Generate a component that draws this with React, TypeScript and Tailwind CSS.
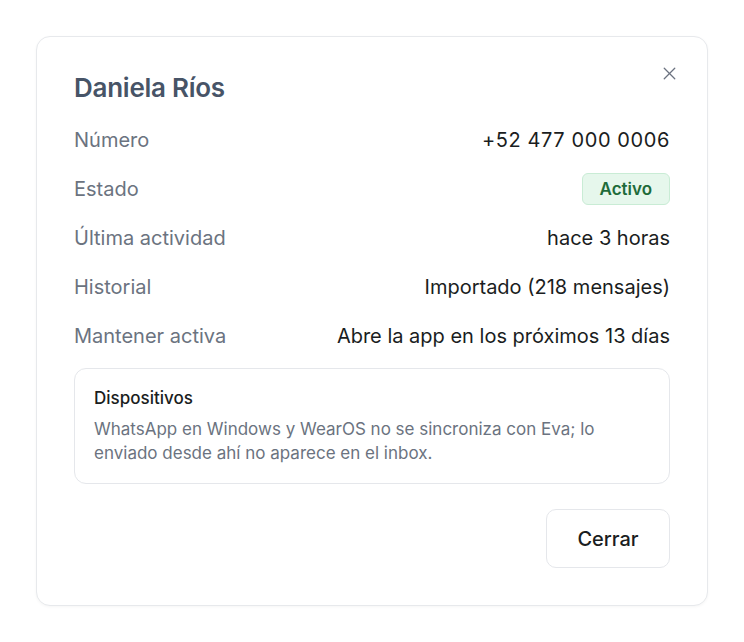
import { X } from 'lucide-react'

const rows = [
  { label: 'Número', value: '+52 477 000 0006', valueClass: 'tracking-[0.03em]' },
  { label: 'Estado', badge: 'Activo' },
  { label: 'Última actividad', value: 'hace 3 horas' },
  { label: 'Historial', value: 'Importado (218 mensajes)' },
  { label: 'Mantener activa', value: 'Abre la app en los próximos 13 días' },
]

export default function App() {
  return (
    <div className="min-h-[642px] w-[744px] bg-white p-[36px] font-['Inter',sans-serif]">
      <div className="relative rounded-[14px] border border-[#e7e9ec] bg-white px-[37px] pt-[33px] pb-[37px] shadow-[0_1px_3px_rgba(0,0,0,0.04)]">
        <button className="absolute right-[27px] top-[26px] text-[#6b7280]">
          <X className="h-[21px] w-[21px]" strokeWidth={1.5} />
        </button>

        <h1 className="text-[26px] font-semibold leading-[36px] tracking-[-0.01em] text-[#475467]">Daniela Ríos</h1>

        <div className="mt-[9px]">
          {rows.map(row => (
            <div key={row.label} className="flex h-[49px] items-center justify-between">
              <span className="text-[20px] text-[#6b7380]">{row.label}</span>
              {row.badge ? (
                <span className="rounded-[6px] border border-[#c9ecd5] bg-[#e6f7ec] px-[17px] py-[3px] text-[17px] font-semibold leading-[24px] text-[#1e6b3a]">
                  {row.badge}
                </span>
              ) : (
                <span className={`text-[20px] text-[#1a1d21] ${row.valueClass ?? ''}`}>{row.value}</span>
              )}
            </div>
          ))}
        </div>

        <div className="mt-[8px] rounded-[12px] border border-[#e5e7eb] px-[19px] pt-[17px] pb-[18px]">
          <div className="text-[17px] font-medium leading-[24px] text-[#1a1d21]">Dispositivos</div>
          <p className="mt-[7px] text-[17px] leading-[24px] text-[#6b7380]">
            WhatsApp en Windows y WearOS no se sincroniza con Eva; lo
            <br />
            enviado desde ahí no aparece en el inbox.
          </p>
        </div>

        <div className="mt-[25px] flex justify-end">
          <button className="h-[59px] w-[124px] rounded-[10px] border border-[#e5e7eb] bg-white text-[20px] font-medium text-[#1a1d21]">
            Cerrar
          </button>
        </div>
      </div>
    </div>
  )
}
